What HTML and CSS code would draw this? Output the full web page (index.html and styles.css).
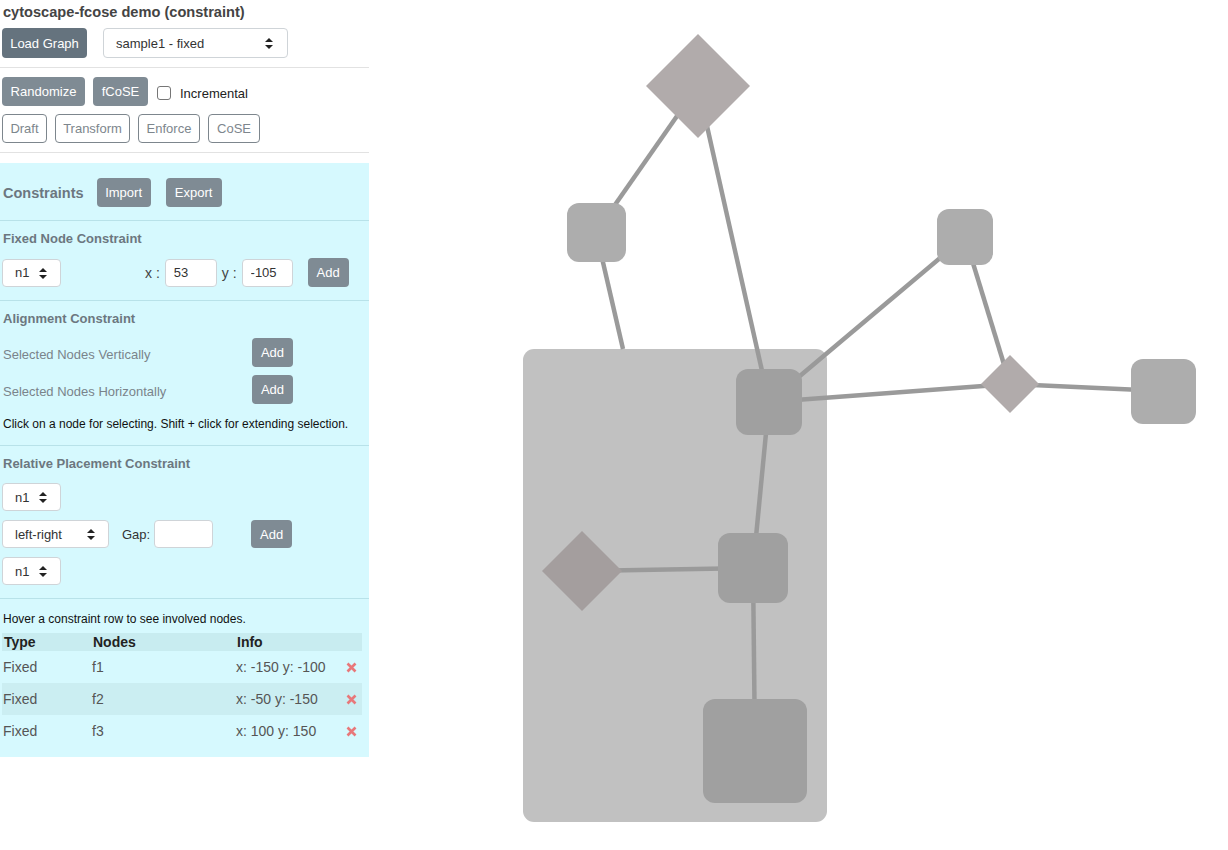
FILE: index.html
```html
<!DOCTYPE html>
<html lang="en">
<head>
    <meta charset="UTF-8">
    <title>cytoscape-fcose demo (constraint)</title>
    <link rel="stylesheet" href="styles.css">
</head>
<body>
    <div class="panel">
        <h1 class="title">cytoscape-fcose demo (constraint)</h1>
        <div class="row">
            <button class="btn btn-dark">Load Graph</button>
            <div class="select select-sample">
                <span>sample1 - fixed</span>
                <svg class="arrows" width="8" height="11" viewBox="0 0 8 11"><path d="M4 0 L8 4 L0 4 Z M0 7 L8 7 L4 11 Z" fill="#222"/></svg>
            </div>
        </div>
        <div class="divider"></div>
        <div class="row">
            <button class="btn btn-random">Randomize</button>
            <button class="btn btn-fcose">fCoSE</button>
            <label class="check"><input type="checkbox"> Incremental</label>
        </div>
        <div class="row row-outline">
            <button class="btn btn-outline btn-draft">Draft</button>
            <button class="btn btn-outline btn-transform">Transform</button>
            <button class="btn btn-outline btn-enforce">Enforce</button>
            <button class="btn btn-outline btn-cose">CoSE</button>
        </div>
        <div class="divider"></div>

        <div class="constraints">
            <div class="section section-head">
                <span class="head-title">Constraints</span>
                <button class="btn btn-import">Import</button>
                <button class="btn btn-export">Export</button>
            </div>

            <div class="section">
                <h3 class="heading">Fixed Node Constraint</h3>
                <div class="row">
                    <div class="select select-node">
                        <span>n1</span>
                        <svg class="arrows" width="8" height="11" viewBox="0 0 8 11"><path d="M4 0 L8 4 L0 4 Z M0 7 L8 7 L4 11 Z" fill="#222"/></svg>
                    </div>
                    <span class="coord coord-x">x :</span>
                    <input class="field field-x" type="text" value="53">
                    <span class="coord coord-y">y :</span>
                    <input class="field field-y" type="text" value="-105">
                    <button class="btn btn-add btn-fixed-add">Add</button>
                </div>
            </div>

            <div class="section">
                <h3 class="heading">Alignment Constraint</h3>
                <div class="row align-row">
                    <span class="align-label">Selected Nodes Vertically</span>
                    <button class="btn btn-add">Add</button>
                </div>
                <div class="row align-row align-row-2">
                    <span class="align-label">Selected Nodes Horizontally</span>
                    <button class="btn btn-add">Add</button>
                </div>
                <p class="hint">Click on a node for selecting. Shift + click for extending selection.</p>
            </div>

            <div class="section">
                <h3 class="heading">Relative Placement Constraint</h3>
                <div class="row">
                    <div class="select select-node">
                        <span>n1</span>
                        <svg class="arrows" width="8" height="11" viewBox="0 0 8 11"><path d="M4 0 L8 4 L0 4 Z M0 7 L8 7 L4 11 Z" fill="#222"/></svg>
                    </div>
                </div>
                <div class="row rel-row">
                    <div class="select select-dir">
                        <span>left-right</span>
                        <svg class="arrows" width="8" height="11" viewBox="0 0 8 11"><path d="M4 0 L8 4 L0 4 Z M0 7 L8 7 L4 11 Z" fill="#222"/></svg>
                    </div>
                    <span class="gap-label">Gap:</span>
                    <input class="field field-gap" type="text">
                    <button class="btn btn-add btn-rel-add">Add</button>
                </div>
                <div class="row rel-row">
                    <div class="select select-node">
                        <span>n1</span>
                        <svg class="arrows" width="8" height="11" viewBox="0 0 8 11"><path d="M4 0 L8 4 L0 4 Z M0 7 L8 7 L4 11 Z" fill="#222"/></svg>
                    </div>
                </div>
            </div>

            <div class="list">
                <p class="hint">Hover a constraint row to see involved nodes.</p>
                <table class="table">
                    <colgroup>
                        <col class="c-type">
                        <col class="c-nodes">
                        <col class="c-info">
                        <col class="c-del">
                    </colgroup>
                    <thead>
                        <tr><th>Type</th><th>Nodes</th><th>Info</th><th></th></tr>
                    </thead>
                    <tbody>
                        <tr>
                            <td>Fixed</td><td>f1</td><td>x: -150 y: -100</td>
                            <td class="del"><svg width="11" height="11" viewBox="0 0 11 11"><path d="M1.5 1.5 L9.5 9.5 M9.5 1.5 L1.5 9.5" stroke="#e8787a" stroke-width="2.6"/></svg></td>
                        </tr>
                        <tr class="alt">
                            <td>Fixed</td><td>f2</td><td>x: -50 y: -150</td>
                            <td class="del"><svg width="11" height="11" viewBox="0 0 11 11"><path d="M1.5 1.5 L9.5 9.5 M9.5 1.5 L1.5 9.5" stroke="#e8787a" stroke-width="2.6"/></svg></td>
                        </tr>
                        <tr>
                            <td>Fixed</td><td>f3</td><td>x: 100 y: 150</td>
                            <td class="del"><svg width="11" height="11" viewBox="0 0 11 11"><path d="M1.5 1.5 L9.5 9.5 M9.5 1.5 L1.5 9.5" stroke="#e8787a" stroke-width="2.6"/></svg></td>
                        </tr>
                    </tbody>
                </table>
            </div>
        </div>
    </div>

    <div class="graph">
        <svg width="859" height="850" viewBox="369 0 859 850">
            <!-- compound parent -->
            <rect x="523" y="349" width="304" height="473" rx="11" fill="#c1c1c1"/>

            <!-- edges -->
            <g stroke="#9a9a9a" stroke-width="4.5">
                <line x1="698" y1="86" x2="596" y2="232"/>
                <line x1="698" y1="86" x2="769" y2="402"/>
                <line x1="596" y1="232" x2="623" y2="349"/>
                <line x1="965" y1="237" x2="769" y2="402"/>
                <line x1="965" y1="237" x2="1010" y2="384"/>
                <line x1="769" y1="402" x2="1010" y2="384"/>
                <line x1="1010" y1="384" x2="1163" y2="391"/>
                <line x1="769" y1="402" x2="753" y2="568"/>
                <line x1="582" y1="571" x2="753" y2="568"/>
                <line x1="753" y1="568" x2="755" y2="751"/>
            </g>

            <!-- nodes -->
            <polygon points="698,34 750,86 698,138 646,86" fill="#b1abab"/>
            <rect x="567" y="203" width="59" height="59" rx="12" fill="#adadad"/>
            <rect x="937" y="209" width="56" height="56" rx="12" fill="#adadad"/>
            <polygon points="1010,355 1039,384 1010,413 981,384" fill="#b1abab"/>
            <rect x="1131" y="359" width="65" height="65" rx="12" fill="#adadad"/>
            <rect x="736" y="369" width="66" height="66" rx="12" fill="#a0a0a0"/>
            <rect x="718" y="533" width="70" height="70" rx="12" fill="#a0a0a0"/>
            <polygon points="582,531 622,571 582,611 542,571" fill="#a49e9e"/>
            <rect x="703" y="699" width="104" height="104" rx="12" fill="#a0a0a0"/>
        </svg>
    </div>
</body>
</html>
```

FILE: styles.css
```css
body {
    margin: 0;
    font-family: "Liberation Sans", Arial, sans-serif;
    display: flex;
    color: #222;
}

.panel {
    width: 369px;
    flex: none;
}

.title {
    font-size: 14.6px;
    line-height: 18px;
    font-weight: bold;
    color: #444;
    margin: 3px 3px 7px;
}

.row {
    display: flex;
    align-items: center;
    padding-left: 2px;
}

.divider {
    border-top: 1px solid #e2e2e2;
    margin: 9px 0;
}

.btn {
    font-family: "Liberation Sans", Arial, sans-serif;
    font-size: 13px;
    color: #fff;
    background-color: #7f8b94;
    border: none;
    border-radius: 4px;
    height: 29px;
    padding: 0;
    cursor: pointer;
}

.btn-dark {
    background-color: #65737e;
    height: 30px;
    width: 85px;
}

.btn-random {
    width: 83px;
}

.btn-fcose {
    width: 55px;
    margin-left: 8px;
}

.btn-outline {
    background-color: #fff;
    color: #7d868d;
    border: 1px solid #7d868d;
}

.btn-draft {
    width: 45px;
}

.btn-transform {
    width: 75px;
}

.btn-enforce {
    width: 62px;
}

.btn-cose {
    width: 52px;
}

.row-outline {
    margin-top: 8px;
    gap: 8px;
}

.check {
    display: flex;
    align-items: center;
    font-size: 13px;
    color: #222;
    margin-left: 9px;
    gap: 9px;
    padding-top: 3px;
}

.check input {
    appearance: none;
    margin: 0;
    width: 14px;
    height: 14px;
    border: 1px solid #767676;
    border-radius: 3px;
    background: #fff;
}

/* custom select look */
.select {
    position: relative;
    display: flex;
    align-items: center;
    box-sizing: border-box;
    background: #fff;
    border: 1px solid #cfd4d8;
    border-radius: 4px;
    font-size: 13px;
    color: #333;
}

.select .arrows {
    position: absolute;
    top: 50%;
    margin-top: -5px;
}

.select-sample {
    width: 185px;
    height: 30px;
    margin-left: 16px;
    padding-left: 12px;
}

.select-sample .arrows {
    right: 14px;
}

.select-node {
    width: 59px;
    height: 28px;
    padding-left: 12px;
}

.select-node .arrows {
    right: 13px;
}

.select-dir {
    width: 107px;
    height: 28px;
    padding-left: 12px;
}

.select-dir .arrows {
    right: 13px;
}

/* constraints panel */
.constraints {
    background-color: #d6f9fe;
    margin-top: 10px;
    padding-bottom: 10px;
}

.section {
    border-bottom: 1px solid #b8e2e9;
    padding-bottom: 13px;
}

.section-head {
    display: flex;
    align-items: center;
    padding: 15px 0 13px 3px;
}

.head-title {
    font-size: 14.5px;
    font-weight: bold;
    color: #6c7780;
}

.btn-import {
    margin-left: 13px;
    width: 54px;
}

.btn-export {
    margin-left: 15px;
    width: 56px;
}

.heading {
    font-size: 13px;
    line-height: 18px;
    font-weight: bold;
    color: #6c7780;
    margin: 0;
    padding: 9px 3px 10px;
}

.coord {
    font-size: 14px;
    color: #444;
}

.coord-x {
    margin-left: 84px;
}

.coord-y {
    margin-left: 5px;
}

.field {
    box-sizing: border-box;
    height: 28px;
    border: 1px solid #cfd4d8;
    border-radius: 4px;
    font-family: "Liberation Sans", Arial, sans-serif;
    font-size: 13px;
    color: #333;
    padding: 0 8px;
    margin-left: 5px;
}

.field-x {
    width: 52px;
}

.field-y {
    width: 51px;
}

.btn-add {
    width: 41px;
}

.btn-fixed-add {
    margin-left: 15px;
    height: 29px;
}

.align-row {
    height: 29px;
}

.align-row-2 {
    margin-top: 8px;
}

.align-label {
    width: 249px;
    padding-left: 1px;
    padding-top: 4px;
    font-size: 13px;
    color: #7a848b;
}

.hint {
    font-size: 12px;
    line-height: 16px;
    color: #111;
    margin: 0;
    padding: 12px 3px 0;
}

.rel-row {
    margin-top: 9px;
}

.gap-label {
    font-size: 13px;
    color: #333;
    margin-left: 13px;
}

.field-gap {
    width: 59px;
    margin-left: 4px;
}

.btn-rel-add {
    margin-left: 38px;
    height: 28px;
}

.table {
    table-layout: fixed;
    border-collapse: collapse;
    margin: 6px 0 0 2px;
    width: 360px;
    font-size: 14px;
}

.c-type {
    width: 89px;
}

.c-nodes {
    width: 144px;
}

.c-info {
    width: 105px;
}

.c-del {
    width: 22px;
}

.table th {
    text-align: left;
    font-weight: bold;
    color: #222;
    background-color: #c8ecf0;
    height: 18px;
    padding: 0 2px;
    line-height: 18px;
}

.table tbody tr {
    height: 32px;
}

.table td {
    color: #555;
    padding: 0 1px;
    white-space: nowrap;
}

.table tr.alt td {
    background-color: #cbeef2;
}

.table td.del svg {
    display: block;
    margin: 0 auto;
}

.graph {
    flex: 1;
    height: 850px;
    overflow: hidden;
}

.graph svg {
    display: block;
}
```
